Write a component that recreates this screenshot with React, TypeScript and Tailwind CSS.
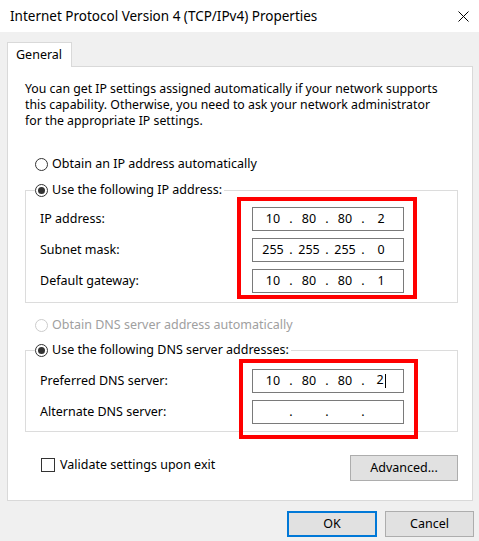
import React from 'react'

const font = { fontFamily: '"Noto Sans", "Liberation Sans", Arial, sans-serif' }

function Radio({ checked = false, disabled = false }: { checked?: boolean; disabled?: boolean }) {
  return (
    <span
      className={`flex h-[13px] w-[13px] shrink-0 items-center justify-center rounded-full border bg-white ${
        disabled ? 'border-[#cccccc]' : 'border-[#333333]'
      }`}
    >
      {checked && <span className="h-[7px] w-[7px] rounded-full bg-[#333333]" />}
    </span>
  )
}

function IpBox({ parts, caret = false }: { parts: string[]; caret?: boolean }) {
  return (
    <div className="flex h-[24px] w-[152px] items-center border border-[#7a7a7a] bg-white pl-[5px] text-[12.5px] leading-none text-black">
      {parts.map((p, i) => (
        <React.Fragment key={i}>
          <span className="flex w-[30px] justify-center">
            {p}
            {caret && i === 3 && <span className="ml-px inline-block h-[14px] w-px bg-black" />}
          </span>
          {i < 3 && <span className="w-[6px] text-center">.</span>}
        </React.Fragment>
      ))}
    </div>
  )
}

function Field({ label, parts, caret }: { label: string; parts: string[]; caret?: boolean }) {
  return (
    <div className="flex items-center">
      <span className="w-[212px] text-[12.5px]">{label}</span>
      <IpBox parts={parts} caret={caret} />
    </div>
  )
}

function Button({ label, primary = false, className = '' }: { label: string; primary?: boolean; className?: string }) {
  return (
    <div
      className={`flex h-[26px] items-center justify-center bg-[#e1e1e1] text-[12.5px] ${
        primary ? 'border-2 border-[#0078d7]' : 'border border-[#adadad]'
      } ${className}`}
    >
      {label}
    </div>
  )
}

export default function App() {
  return (
    <div className="relative h-[541px] w-[479px] overflow-hidden bg-[#f0f0f0] text-black" style={font}>
      {/* title bar */}
      <div className="flex h-[32px] items-center justify-between bg-white pl-[10px] pr-[10px]">
        <span className="text-[13.5px]">Internet Protocol Version 4 (TCP/IPv4) Properties</span>
        <svg width="11" height="11" viewBox="0 0 11 11">
          <path d="M0.5 0.5 L10.5 10.5 M10.5 0.5 L0.5 10.5" stroke="#000" strokeWidth="1" />
        </svg>
      </div>

      <div className="px-[7px] pt-[10px]">
        {/* tab */}
        <div className="relative z-10 -mb-px flex h-[25px] w-[65px] items-center border border-b-0 border-[#d9d9d9] bg-white pl-[8px] text-[12.5px]">
          General
        </div>

        {/* panel */}
        <div className="h-[435px] w-[466px] border border-[#d9d9d9] bg-white px-[17px] pt-[14px]">
          <p className="text-[12.3px] leading-[16px]">
            You can get IP settings assigned automatically if your network supports
            <br />
            this capability. Otherwise, you need to ask your network administrator
            <br />
            for the appropriate IP settings.
          </p>

          <div className="ml-[10px] mt-[27px] flex h-[16px] items-center gap-[4px] text-[12.5px]">
            <Radio />
            <span>Obtain an IP address automatically</span>
          </div>

          {/* IP group */}
          <div className="relative mt-[18px] w-[433px] border border-[#dcdcdc] pb-[9px] pl-[14px] pt-[16px]">
            <div className="absolute -top-[9px] left-[9px] flex h-[16px] items-center gap-[4px] bg-white pr-[2px] text-[12.5px]">
              <Radio checked />
              <span>Use the following IP address:</span>
            </div>
            <div className="flex flex-col gap-[7px]">
              <Field label="IP address:" parts={['10', '80', '80', '2']} />
              <Field label="Subnet mask:" parts={['255', '255', '255', '0']} />
              <Field label="Default gateway:" parts={['10', '80', '80', '1']} />
            </div>
          </div>

          <div className="ml-[10px] mt-[14px] flex h-[16px] items-center gap-[4px] text-[12.5px] text-[#a0a0a0]">
            <Radio disabled />
            <span>Obtain DNS server address automatically</span>
          </div>

          {/* DNS group */}
          <div className="relative mt-[17px] w-[433px] border border-[#dcdcdc] pb-[7px] pl-[14px] pt-[18px]">
            <div className="absolute -top-[9px] left-[9px] flex h-[16px] items-center gap-[4px] bg-white pr-[2px] text-[12.5px]">
              <Radio checked />
              <span>Use the following DNS server addresses:</span>
            </div>
            <div className="flex flex-col gap-[7px]">
              <Field label="Preferred DNS server:" parts={['10', '80', '80', '2']} caret />
              <Field label="Alternate DNS server:" parts={['', '', '', '']} />
            </div>
          </div>

          <div className="mt-[23px] flex w-[433px] items-start justify-between">
            <div className="ml-[16px] mt-px flex items-center gap-[5px] text-[12.5px]">
              <span className="h-[14px] w-[14px] border border-[#333333] bg-white" />
              <span>Validate settings upon exit</span>
            </div>
            <Button label="Advanced..." className="w-[108px]" />
          </div>
        </div>

        {/* dialog buttons */}
        <div className="-mr-[2px] mt-[10px] flex justify-end gap-[8px]">
          <Button label="OK" primary className="w-[90px]" />
          <Button label="Cancel" className="w-[89px]" />
        </div>
      </div>

      {/* red annotation boxes */}
      <div className="absolute left-[237px] top-[197px] h-[102px] w-[180px] border-4 border-[#ff0000]" />
      <div className="absolute left-[239px] top-[359px] h-[80px] w-[179px] border-4 border-[#ff0000]" />
    </div>
  )
}
